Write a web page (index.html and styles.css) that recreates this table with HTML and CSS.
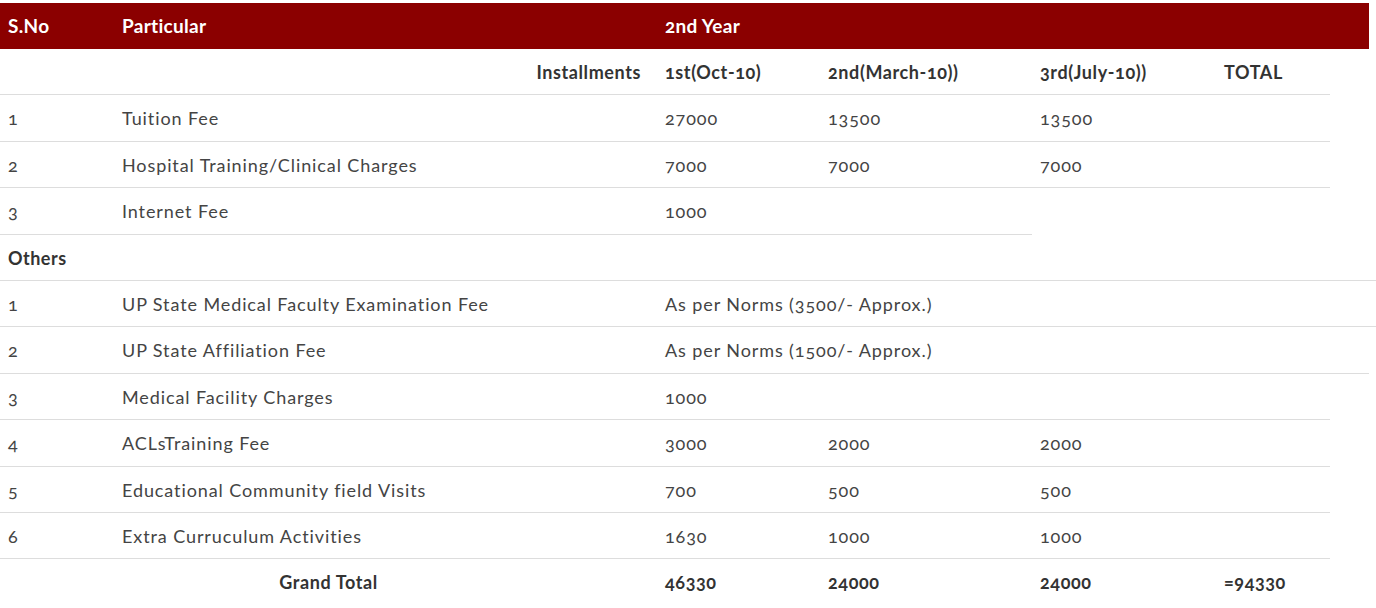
FILE: index.html
```html
<!DOCTYPE html>
<html>
<head>
<meta charset="utf-8">
<link rel="stylesheet" href="styles.css">
</head>
<body>
<div class="wrap">
<table class="fee">
  <colgroup>
    <col class="c1"><col class="c2"><col class="c3"><col class="c4"><col class="c5"><col class="c6"><col class="c7"><col class="c8">
  </colgroup>
  <thead>
    <tr class="head">
      <th>S.No</th><th>Particular</th><th colspan="5">2nd Year</th>
    </tr>
  </thead>
  <tbody>
    <tr class="sub">
      <th colspan="2" class="inst">Installments</th><th>1st(Oct-10)</th><th>2nd(March-10))</th><th>3rd(July-10))</th><th>TOTAL</th>
    </tr>
    <tr><td>1</td><td>Tuition Fee</td><td>27000</td><td>13500</td><td>13500</td><td></td></tr>
    <tr><td>2</td><td>Hospital Training/Clinical Charges</td><td>7000</td><td>7000</td><td>7000</td><td></td></tr>
    <tr><td>3</td><td>Internet Fee</td><td>1000</td><td></td><td></td><td></td></tr>
    <tr><td colspan="4" class="grp">Others</td></tr>
    <tr><td>1</td><td>UP State Medical Faculty Examination Fee</td><td colspan="6">As per Norms (3500/- Approx.)</td></tr>
    <tr><td>2</td><td>UP State Affiliation Fee</td><td colspan="6">As per Norms (1500/- Approx.)</td></tr>
    <tr><td>3</td><td>Medical Facility Charges</td><td colspan="5">1000</td></tr>
    <tr><td>4</td><td>ACLsTraining Fee</td><td>3000</td><td>2000</td><td>2000</td><td></td></tr>
    <tr><td>5</td><td>Educational Community field Visits</td><td>700</td><td>500</td><td>500</td><td></td></tr>
    <tr><td>6</td><td>Extra Curruculum Activities</td><td>1630</td><td>1000</td><td>1000</td><td></td></tr>
    <tr class="total"><td colspan="2" class="gt">Grand Total</td><td>46330</td><td>24000</td><td>24000</td><td>=94330</td></tr>
  </tbody>
</table>
</div>
</body>
</html>
```

FILE: styles.css
```css
html, body {
  margin: 0;
  padding: 0;
  background: #fff;
}
.wrap {
  padding-top: 3px;
  overflow: hidden;
}
.fee {
  border-collapse: collapse;
  table-layout: fixed;
  width: 1376px;
  font-family: Lato, "Liberation Sans", sans-serif;
  font-variant-numeric: oldstyle-nums;
  font-size: 18px;
  letter-spacing: 0.9px;
  color: #444;
}
.c1 { width: 114px; }
.c2 { width: 543px; }
.c3 { width: 163px; }
.c4 { width: 212px; }
.c5 { width: 184px; }
.c6 { width: 114px; }
.c7 { width: 39px; }
.c8 { width: 7px; }
.fee td, .fee th {
  padding: 11px 8px 9px;
  line-height: 25.4px;
  text-align: left;
  vertical-align: middle;
  white-space: nowrap;
}
.fee tbody td, .fee tbody th {
  border-top: 1px solid #ddd;
}
.head th {
  background: #8b0000;
  color: #fff;
  font-weight: 700;
  font-size: 19px;
  letter-spacing: 0.3px;
  height: 26px;
  line-height: 26px;
  padding: 10px 8px;
}
.sub th {
  font-weight: 700;
  color: #333;
  letter-spacing: 0.6px;
}
.fee .sub th { border-top: none; }
.sub th.inst {
  text-align: right;
  padding-right: 16px;
}
.grp {
  font-weight: 700;
  color: #333;
  letter-spacing: 0.5px;
}
.total td {
  font-weight: 700;
  color: #333;
  letter-spacing: 0.6px;
}
.total td.gt {
  text-align: center;
}
```
